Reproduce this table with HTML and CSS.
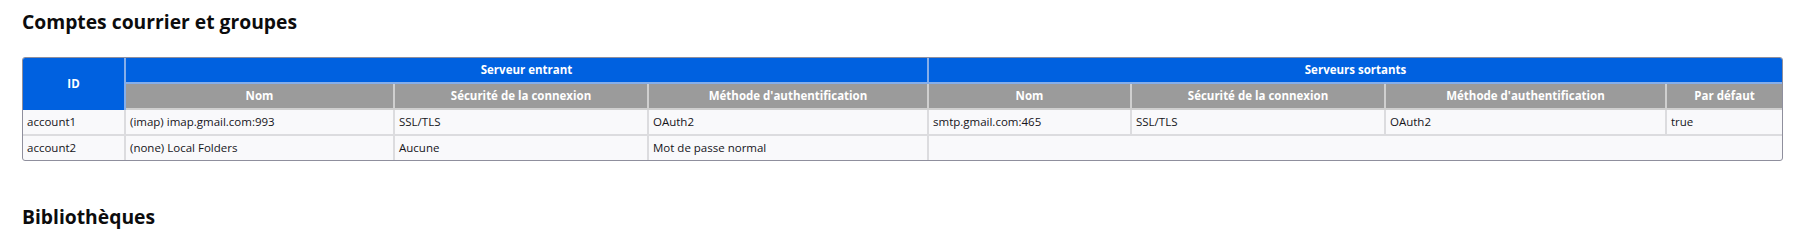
FILE: index.html
```html
<!DOCTYPE html>
<html lang="fr">
<head>
<meta charset="utf-8">
<title>Informations de dépannage</title>
<link rel="stylesheet" href="styles.css">
</head>
<body>
<section class="section">
  <h2 class="section-title">Comptes courrier et groupes</h2>
  <table class="data-table">
    <colgroup>
      <col class="col-id">
      <col class="col-name">
      <col class="col-sec">
      <col class="col-auth">
      <col class="col-name2">
      <col class="col-sec">
      <col class="col-auth2">
      <col class="col-default">
    </colgroup>
    <thead>
      <tr>
        <th class="head-main" rowspan="2">ID</th>
        <th class="head-main" colspan="3">Serveur entrant</th>
        <th class="head-main last" colspan="4">Serveurs sortants</th>
      </tr>
      <tr>
        <th class="head-sub">Nom</th>
        <th class="head-sub">Sécurité de la connexion</th>
        <th class="head-sub">Méthode d'authentification</th>
        <th class="head-sub">Nom</th>
        <th class="head-sub">Sécurité de la connexion</th>
        <th class="head-sub">Méthode d'authentification</th>
        <th class="head-sub last">Par défaut</th>
      </tr>
    </thead>
    <tbody>
      <tr>
        <td>account1</td>
        <td>(imap) imap.gmail.com:993</td>
        <td>SSL/TLS</td>
        <td>OAuth2</td>
        <td>smtp.gmail.com:465</td>
        <td>SSL/TLS</td>
        <td>OAuth2</td>
        <td class="last">true</td>
      </tr>
      <tr class="last-row">
        <td>account2</td>
        <td>(none) Local Folders</td>
        <td>Aucune</td>
        <td>Mot de passe normal</td>
        <td class="last" colspan="4"></td>
      </tr>
    </tbody>
  </table>
</section>
<section class="section">
  <h2 class="section-title">Bibliothèques</h2>
</section>
</body>
</html>
```
FILE: styles.css
```css
html, body {
  margin: 0;
  background: #ffffff;
}

body {
  padding: 0 12px 0 22px;
  font-family: "Open Sans", "Noto Sans", sans-serif;
  color: #15141a;
}

.section {
  margin-bottom: 34px;
}

.section-title {
  margin: 0;
  padding-top: 8px;
  font-size: 19.3px;
  line-height: 28px;
  font-weight: 700;
  color: #0c0c0d;
}

.data-table {
  margin-top: 21px;
  width: 100%;
  table-layout: fixed;
  border-collapse: separate;
  border-spacing: 0;
  border: 1px solid #8f8f9d;
  border-radius: 3px;
  background: #f9f9fb;
  font-size: 11.5px;
  line-height: 16px;
}

.col-id { width: 103px; }
.col-name { width: 269px; }
.col-sec { width: 254px; }
.col-auth { width: 280px; }
.col-name2 { width: 203px; }
.col-auth2 { width: 281px; }
.col-default { width: auto; }

.data-table th,
.data-table td {
  padding: 4px;
  border-right: 2px solid #dcdcdf;
  border-bottom: 2px solid #dcdcdf;
  white-space: nowrap;
  overflow: hidden;
}

.data-table th.last,
.data-table td.last {
  border-right: 0;
}

.data-table .last-row td {
  border-bottom: 0;
}

.data-table td {
  text-align: left;
  color: #15141a;
}

.head-main {
  background: #0061e0;
  color: #ffffff;
  font-weight: 700;
  text-align: center;
  border-color: #86aee9 !important;
}

.data-table th.head-main:first-child {
  border-bottom: 0;
  border-top-left-radius: 2px;
}

.data-table th.head-main.last {
  border-top-right-radius: 2px;
}

.head-sub {
  background: #9b9b9b;
  color: #ffffff;
  font-weight: 700;
  text-align: center;
  border-color: #cfcfcf !important;
}
```
